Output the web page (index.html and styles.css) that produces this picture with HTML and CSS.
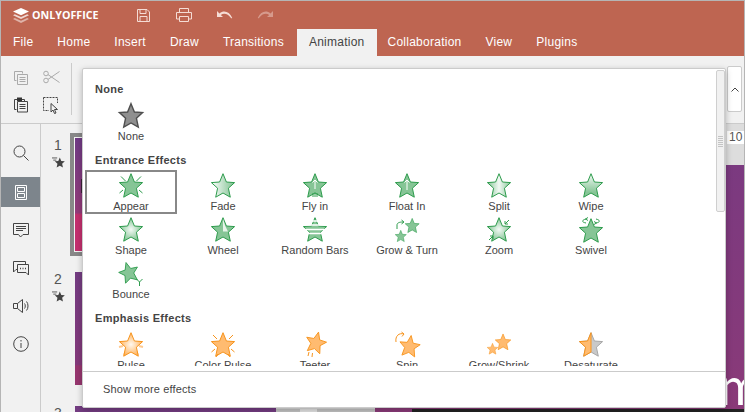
FILE: index.html
```html
<!DOCTYPE html>
<html lang="en">

<head>
    <meta charset="UTF-8" />
    <title>ONLYOFFICE Animation</title>
    <link rel="stylesheet" href="styles.css">
</head>

<body>
    <svg class="defs" width="0" height="0">
        <defs>
            <path id="star" d="M12 .7 15.4 9 23.6 9.6 17.4 15.2 19.3 24.2 12 20 4.7 24.2 6.6 15.2 .4 9.6 8.600 9Z" />
            <linearGradient id="gFade"><stop offset="0" stop-color="#fff" /><stop offset="1" stop-color="#7dc08f" /></linearGradient>
            <linearGradient id="gSplit"><stop offset="0" stop-color="#86c596" /><stop offset=".5" stop-color="#f2f9f4" /><stop offset="1" stop-color="#86c596" /></linearGradient>
            <linearGradient id="gWipe" x2="0" y2="1"><stop offset="0" stop-color="#f4faf6" /><stop offset=".8" stop-color="#86c596" /></linearGradient>
            <radialGradient id="gShape"><stop offset="0" stop-color="#f4faf6" /><stop offset="1" stop-color="#86c596" /></radialGradient>
            <radialGradient id="gPulse"><stop offset="0" stop-color="#fff8ef" /><stop offset="1" stop-color="#ffb45f" /></radialGradient>
        </defs>
    </svg>

    <div class="app">
        <div class="titlebar">
            <div class="logo">
                <svg width="16" height="15" viewBox="0 0 16 15">
                    <path d="M8 0 16 3.6 8 7.2 0 3.6Z" />
                    <path d="M1.8 6.2 0 7.2 8 11 16 7.2 14.2 6.2 8 9Z" opacity=".75" />
                    <path d="M1.8 10 0 11 8 15 16 11 14.2 10 8 12.8Z" opacity=".5" />
                </svg>
                <span>ONLYOFFICE</span>
            </div>
            <div class="quick">
                <svg width="16" height="16" viewBox="0 0 16 16"><path d="M2.5 2.5H12L14.5 5V14.5H2.5ZM5 2.5V6.5H11V2.5M5 14.5V9.5H12V14.5" /></svg>
                <svg width="18" height="16" viewBox="0 0 18 16"><path d="M4.5 5V1.5H13.5V5M4.5 12H1.5V5.5H16.5V12H13.5M4.5 9.5H13.5V14.5H4.5Z" /></svg>
                <svg width="16" height="10" viewBox="0 0 16 10"><path class="solid" d="M0 1V7H6L3.8 4.9C6.5 2.6 11 3.3 14 8 14.5 8.7 15.5 8.2 15 7.4 12.500 1.900 7 -.4 2.500 3.500Z" /></svg>
                <svg class="off" width="16" height="10" viewBox="0 0 16 10"><path class="solid" d="M16 1V7H10L12.200 4.900C9.500 2.600 5 3.300 2 8 1.500 8.700 .5 8.200 1 7.400 3.500 1.900 9 -.4 13.500 3.500Z" /></svg>
            </div>
        </div>

        <div class="tabs">
            <div class="tab">File</div>
            <div class="tab">Home</div>
            <div class="tab">Insert</div>
            <div class="tab">Draw</div>
            <div class="tab">Transitions</div>
            <div class="tab active">Animation</div>
            <div class="tab">Collaboration</div>
            <div class="tab">View</div>
            <div class="tab">Plugins</div>
        </div>

        <div class="toolbar">
            <div class="tool-grid">
                <svg class="off" width="16" height="16" viewBox="0 0 16 16"><path d="M1.500 1.500H9.500V3.500M1.500 1.500V10.500H3.500M4.500 4.500H14.500V14.500H4.500ZM6.500 7.500H12.500M6.500 9.500H12.500M6.500 11.500H12.500" /></svg>
                <svg class="off" width="17" height="14" viewBox="0 0 17 14"><circle cx="3" cy="3.500" r="2.300" /><circle cx="3" cy="10.500" r="2.300" /><path d="M5 4.600 16.500 12.500M5 9.400 16.500 1.500" /></svg>
                <svg width="16" height="16" viewBox="0 0 16 16"><path d="M3.500 12.500H1.500V2.500H4M9 2.500H11.500V4.500M4.500 4.500H14.500V15H4.500ZM6.500 7.500H12.500M6.500 9.500H12.500M6.500 11.500H12.500" /><path class="solid" d="M4 .500H9V4H4Z" /></svg>
                <svg width="16" height="17" viewBox="0 0 16 17"><path class="dash" d="M.500 .500H14.500V6M.500 .500V13.500H6" /><path d="M8 6.500V15L10 13 11.500 16.500 13 16 11.500 12.500H14.500Z" /></svg>
            </div>
            <div class="tool-sep"></div>
            <button class="collapse">
                <svg width="8" height="5" viewBox="0 0 8 5"><path d="M.500 4.500 4 1 7.500 4.500" /></svg>
            </button>
        </div>

        <div class="workspace">
            <div class="sidebar">
                <div class="side-btn search"><svg width="16" height="16" viewBox="0 0 16 16"><circle cx="6.500" cy="6.500" r="5.500" /><path d="M10.500 10.500 15.500 15.500" /></svg></div>
                <div class="side-btn active"><svg width="12" height="15" viewBox="0 0 12 15"><path d="M.500 .500H11.500V14.500H.500ZM2.500 2.500H9.500V6.500H2.500ZM2.500 8.500H9.500V12.500H2.500Z" /></svg></div>
                <div class="side-btn"><svg width="16" height="15" viewBox="0 0 16 15"><path d="M.500 .500H15.500V11.500H10L7.500 14 5.500 11.500H.500ZM3 3.500H13M3 5.500H13M3 7.500H10" /></svg></div>
                <div class="side-btn"><svg width="16" height="15" viewBox="0 0 16 15"><path d="M12.500 3V.500H.500V11L3 8.500H4M4.500 3.500H15.500V14L13 11.500H4.500Z" /><path class="dots" d="M7 7.500H8M9.500 7.500H10.500M12 7.500H13" /></svg></div>
                <div class="side-btn"><svg width="16" height="14" viewBox="0 0 16 14"><path d="M.500 4.500H4.500L9.500 .500V13.500L4.500 9.500H.500ZM4.500 4.500V9.500M11.500 4.500C12.500 5.500 12.500 8.500 11.500 9.500M13.500 2.500C15.500 4.500 15.500 9.500 13.500 11.500" /></svg></div>
                <div class="side-btn"><svg width="16" height="16" viewBox="0 0 16 16"><circle cx="8" cy="8" r="7.300" /><path d="M8 7V12M8 4V5.500" /></svg></div>
            </div>

            <div class="thumbs">
                <div class="thumb-row">
                    <div class="thumb-side">
                        <span>1</span>
                        <svg width="13" height="11" viewBox="-6 0 30 25"><use href="#star" fill="#444" /><path class="lines" d="M-6 2H6M-3 7H4" /></svg>
                    </div>
                    <div class="thumb first selected"><i class="thumb-mark"></i></div>
                </div>
                <div class="thumb-row">
                    <div class="thumb-side">
                        <span>2</span>
                        <svg width="13" height="11" viewBox="-6 0 30 25"><use href="#star" fill="#444" /><path class="lines" d="M-6 2H6M-3 7H4" /></svg>
                    </div>
                    <div class="thumb second"></div>
                </div>
                <div class="thumb-row">
                    <div class="thumb-side"><span>3</span></div>
                    <div class="thumb second"></div>
                </div>
            </div>

            <div class="editor">
                <div class="ruler">10</div>
                <div class="slide">
                    <span class="slide-title">m</span>
                    <i class="slide-band"></i>
                </div>
                <div class="hscroll"><i></i></div>
            </div>
        </div>

        <div class="effects">
            <div class="effects-scroll">
                <div class="group-title loose">None</div>
                <div class="fx-grid">
                    <div class="fx">
                        <svg width="24" height="25" viewBox="0 0 24 25"><use href="#star" class="st-none" fill="#8f8f8f" /></svg>
                        <span>None</span>
                    </div>
                </div>

                <div class="group-title">Entrance Effects</div>
                <div class="fx-grid">
                    <div class="fx selected">
                        <svg width="24" height="25" viewBox="0 0 24 25"><use href="#star" class="st-g" fill="#86c596" /><path class="ray-g" d="M2 3.500 6.500 8M22 3.500 17.500 8M4 17 .5 20M20 17 23.500 20" /></svg>
                        <span>Appear</span>
                    </div>
                    <div class="fx">
                        <svg width="24" height="25" viewBox="0 0 24 25"><use href="#star" class="st-g" fill="url(#gFade)" /></svg>
                        <span>Fade</span>
                    </div>
                    <div class="fx">
                        <svg width="24" height="25" viewBox="0 0 24 25"><use href="#star" class="st-g" fill="#86c596" /><path class="arrow-w" d="M12 16V7M9.500 9.500 12 7 14.500 9.500" /><path class="ray-g" d="M10 20V24M12 19.500V24M14 20V24" /></svg>
                        <span>Fly in</span>
                    </div>
                    <div class="fx">
                        <svg width="24" height="25" viewBox="0 0 24 25"><use href="#star" class="st-g" fill="#86c596" /><path class="arrow-w" d="M12 17V7M9.500 9.500 12 7 14.500 9.500" /></svg>
                        <span>Float In</span>
                    </div>
                    <div class="fx">
                        <svg width="24" height="25" viewBox="0 0 24 25"><use href="#star" class="st-g" fill="url(#gSplit)" /></svg>
                        <span>Split</span>
                    </div>
                    <div class="fx">
                        <svg width="24" height="25" viewBox="0 0 24 25"><use href="#star" class="st-g" fill="url(#gWipe)" /></svg>
                        <span>Wipe</span>
                    </div>
                    <div class="fx">
                        <svg width="24" height="25" viewBox="0 0 24 25"><use href="#star" class="st-g" fill="url(#gShape)" /></svg>
                        <span>Shape</span>
                    </div>
                    <div class="fx">
                        <svg width="24" height="25" viewBox="0 0 24 25"><use href="#star" class="st-g" fill="#86c596" /><path class="wedge" d="M12 2 14.500 9.500 17 14.500 12 14.500Z" /></svg>
                        <span>Wheel</span>
                    </div>
                    <div class="fx">
                        <svg width="24" height="25" viewBox="0 0 24 25"><use href="#star" class="st-g" fill="#86c596" /><path class="arrow-w wide" d="M0 4H24M0 8H24M0 12.500H24M0 16.500H24" /></svg>
                        <span>Random Bars</span>
                    </div>
                    <div class="fx">
                        <svg width="24" height="25" viewBox="0 0 24 25"><use href="#star" class="st-g" fill="#86c596" transform="translate(10 1) scale(.6)" /><use href="#star" class="st-g" fill="#86c596" transform="translate(0 13) scale(.48)" /><path class="ray-g" d="M2 12V8C2 6 4 5 8 5M6.500 3 9 5 6.500 7" /></svg>
                        <span>Grow &amp; Turn</span>
                    </div>
                    <div class="fx">
                        <svg width="24" height="25" viewBox="0 0 24 25"><use href="#star" class="st-g" fill="url(#gShape)" /><path class="ray-g" d="M22 3 18 7M18 4V7H21M2 23 6 19M3 19H6V22" /></svg>
                        <span>Zoom</span>
                    </div>
                    <div class="fx">
                        <svg width="24" height="25" viewBox="0 0 24 25"><use href="#star" class="st-g" fill="#86c596" transform="translate(0 1)" /><path class="ray-g" d="M7 2C3 3 2 5 7 6M17 2C21 3 22 5 17 6M9 .5 6.500 2 9 3.500M15 4.500 17.500 6 15 7.500" /></svg>
                        <span>Swivel</span>
                    </div>
                    <div class="fx">
                        <svg width="24" height="25" viewBox="0 0 24 25"><use href="#star" class="st-g" fill="#86c596" transform="rotate(-16 12 12) scale(.84)" /><path class="ray-g" d="M17.500 18 20.500 21 23.500 18M20.500 21V25" /></svg>
                        <span>Bounce</span>
                    </div>
                </div>

                <div class="group-title loose">Emphasis Effects</div>
                <div class="fx-grid">
                    <div class="fx">
                        <svg width="24" height="25" viewBox="0 0 24 25"><path class="ray-o soft" d="M4 14 0 15M20 14 24 15M7 19 5 23M17 19 19 23" /><use href="#star" class="st-o" fill="url(#gPulse)" /></svg>
                        <span>Pulse</span>
                    </div>
                    <div class="fx">
                        <svg width="24" height="25" viewBox="0 0 24 25"><use href="#star" class="st-o" fill="#ffbb70" /><path class="ray-o" d="M2 3 6 7M22 3 18 7M4 17 .5 20M20 17 23.500 20M5 25 7 22M19 25 17 22" /></svg>
                        <span>Color Pulse</span>
                    </div>
                    <div class="fx">
                        <svg width="24" height="25" viewBox="0 0 24 25"><use href="#star" class="st-o" fill="#ffbb70" transform="rotate(14 12 12) translate(2 -1) scale(.88)" /><path class="ray-o" d="M6 20 5 24M9.500 21 9 25" /></svg>
                        <span>Teeter</span>
                    </div>
                    <div class="fx">
                        <svg width="24" height="25" viewBox="0 0 24 25"><use href="#star" class="st-o" fill="#ffbb70" transform="translate(4 3) rotate(8 12 12) scale(.88)" /><path class="ray-o" d="M1 10C0 4 4 .5 9 2M6.500 0 9 2 7 4.500" /></svg>
                        <span>Spin</span>
                    </div>
                    <div class="fx">
                        <svg width="24" height="25" viewBox="0 0 24 25"><use href="#star" class="st-o" fill="#ffbb70" transform="translate(8 1.500) scale(.67)" /><use href="#star" class="st-o" fill="#ffbb70" transform="translate(0 11) scale(.46)" /></svg>
                        <span>Grow/Shrink</span>
                    </div>
                    <div class="fx">
                        <svg width="24" height="25" viewBox="0 0 24 25">
                            <use href="#star" class="st-grey" fill="#c9c9c9" />
                            <path class="st-o" d="M12 .7V20L4.700 24.200 6.600 15.200 .4 9.600 8.600 9Z" />
                        </svg>
                        <span>Desaturate</span>
                    </div>
                </div>
            </div>
            <div class="effects-foot">Show more effects</div>
            <div class="vscroll"><i></i></div>
        </div>
    </div>
</body>

</html>
```
FILE: styles.css
```css
* {
    box-sizing: border-box;
}

body {
    margin: 0;
    background-color: #fff;
    font-family: "Liberation Sans", Arial, sans-serif;
    overflow: hidden;
}

.defs {
    position: absolute;
}

svg {
    display: block;
    overflow: visible;
}

svg path,
svg circle {
    fill: none;
    stroke: #444;
}

/* the shared star takes its colours from each use */
svg path#star {
    fill: inherit;
    stroke: inherit;
}

.app {
    position: relative;
    display: flex;
    flex-direction: column;
    width: 745px;
    height: 412px;
    border: 1px solid #b5b5b5;
    border-bottom: none;
    overflow: hidden;
}

/* header */
.titlebar {
    display: flex;
    align-items: center;
    height: 28px;
    padding-left: 12px;
    background-color: #be6551;
}

.logo {
    display: flex;
    align-items: center;
    gap: 3px;
    width: 122px;
    color: #fff;
    font-family: "Open Sans", sans-serif;
    font-size: 10.7px;
    font-weight: 700;
}

.logo svg path {
    fill: #fff;
    stroke: none;
}

.quick {
    display: flex;
    align-items: center;
    gap: 24px;
}

.quick svg path {
    stroke: #f5dcd5;
}

.quick svg .solid {
    fill: #f5dcd5;
    stroke: none;
}

.quick .off {
    opacity: 0.45;
}

.tabs {
    display: flex;
    height: 27px;
    background-color: #be6551;
}

.tab {
    padding: 0 12px;
    color: #fff;
    font-size: 12px;
    letter-spacing: 0.25px;
    line-height: 27px;
}

.tab.active {
    margin-left: 1px;
    margin-right: -1px;
    color: #444;
    background-color: #f1f1f1;
}

/* toolbar */
.toolbar {
    position: relative;
    display: flex;
    height: 68px;
    padding: 14px 0 0 12px;
    background-color: #f1f1f1;
    border-bottom: 1px solid #cbcbcb;
}

.tool-grid {
    display: grid;
    grid-template-columns: 30px 22px;
    grid-auto-rows: 27px;
}

.tool-grid .off path,
.tool-grid .off circle {
    stroke: #aaa;
}

.tool-grid .solid {
    fill: #333;
    stroke: none;
}

.tool-grid .dash {
    stroke-dasharray: 2 1;
}

.tool-sep {
    width: 1px;
    height: 52px;
    margin: -7px 0 0 6px;
    background-color: #cbcbcb;
}

.collapse {
    position: absolute;
    top: 10px;
    right: 2px;
    display: flex;
    align-items: center;
    justify-content: center;
    width: 15px;
    height: 46px;
    padding: 0;
    background-color: #fff;
    border: 1px solid #cbcbcb;
    border-radius: 2px;
}

/* left side */
.workspace {
    flex: 1;
    display: flex;
    min-height: 0;
}

.sidebar {
    display: flex;
    flex-direction: column;
    gap: 8px;
    width: 40px;
    padding-top: 15px;
    background-color: #f1f1f1;
    border-right: 1px solid #cbcbcb;
}

.side-btn {
    display: flex;
    align-items: center;
    justify-content: center;
    height: 30px;
}

.side-btn.search {
    padding-bottom: 2px;
}

.side-btn.active {
    background-color: #7d858c;
}

.side-btn.active path {
    stroke: #fff;
}

.side-btn .dots {
    stroke-width: 1.5;
}

.thumbs {
    display: flex;
    flex-direction: column;
    gap: 21px;
    width: 235px;
    padding-top: 14px;
    background-color: #f1f1f1;
    overflow: hidden;
}

.thumb-row {
    display: flex;
    flex-shrink: 0;
    height: 113px;
}

.thumb-side {
    display: flex;
    flex-direction: column;
    align-items: center;
    gap: 4px;
    width: 34px;
    margin-top: -1px;
    color: #555;
    font-size: 14px;
}

.thumb-side .lines {
    stroke-width: 2;
}

.thumb {
    position: relative;
    flex: 1;
}

.thumb.first {
    background: linear-gradient(#6f3a85, #933a79 66%, #c32f6e 68%, #c42f6e);
}

.thumb.second {
    background: linear-gradient(#733c82, #84397a 82%, #97366f 83%);
}

.thumb.selected {
    outline: 4px solid #888;
    outline-offset: 1px;
}

.thumb-mark {
    position: absolute;
    top: 41px;
    left: 6px;
    width: 2px;
    height: 14px;
    background-color: #3a2238;
}

/* editor */
.editor {
    position: relative;
    flex: 1;
    display: flex;
    flex-direction: column;
    background-color: #ddd;
}

.ruler {
    height: 13px;
    margin: 7px 0 21px 451px;
    padding-left: 2px;
    color: #555;
    font-size: 12px;
    line-height: 13px;
    background-color: #fff;
}

.slide {
    position: relative;
    flex: 1;
    margin-left: 99px;
    background: linear-gradient(#7b3a80, #8a3a78);
    overflow: hidden;
}

.slide-title {
    position: absolute;
    left: 344px;
    top: 190px;
    color: #fff;
    font-family: Lato, sans-serif;
    font-weight: 400;
    font-size: 52px;
    line-height: 60px;
}

.slide-band {
    position: absolute;
    right: 0;
    bottom: 0;
    left: 37px;
    height: 3px;
    background-color: #222;
}

.hscroll {
    position: absolute;
    left: 0;
    bottom: 0;
    width: 99px;
    height: 3px;
    padding-left: 24px;
    background-color: #c2c2c2;
}

.hscroll i {
    display: block;
    width: 17px;
    height: 3px;
    background-color: #e2e2e2;
}

/* effects dropdown */
.effects {
    position: absolute;
    top: 67px;
    left: 81px;
    display: flex;
    flex-direction: column;
    width: 644px;
    height: 340px;
    background-color: #fff;
    border: 1px solid #cbcbcb;
    border-radius: 2px;
    box-shadow: 0 2px 6px rgba(0, 0, 0, 0.25);
}

.effects-scroll {
    height: 299px;
    padding: 12px 0 0 2px;
    overflow: hidden;
}

.group-title {
    height: 16px;
    margin: 8px 0 2px 10px;
    color: #444;
    font-size: 11px;
    font-weight: 700;
    letter-spacing: 0.3px;
    line-height: 16px;
}

.group-title:first-child {
    margin-top: 0;
}

.group-title.loose {
    margin-bottom: 3px;
}

.fx-grid {
    display: grid;
    grid-template-columns: repeat(6, 92px);
    grid-auto-rows: 44px;
}

.fx {
    display: flex;
    flex-direction: column;
    align-items: center;
    padding-top: 3px;
    color: #444;
    font-size: 11px;
    line-height: 14px;
}

.fx span {
    margin-top: 1px;
    white-space: nowrap;
}

.fx.selected {
    border: 2px solid #888;
    padding-top: 1px;
}

.st-g {
    stroke: #2e9c4d;
}

.st-o {
    stroke: #f7941d;
}

.st-none {
    stroke: #4f4f4f;
    stroke-width: 1.4;
}

.st-grey {
    stroke: #a8a8a8;
}

svg path.st-o {
    fill: #ffbb70;
    stroke: #f7941d;
}

svg path.ray-g {
    stroke: #2e9c4d;
}

svg path.ray-o {
    stroke: #f7941d;
}

svg path.ray-o.soft {
    stroke: #ffc98f;
    stroke-width: 2;
}

svg path.arrow-w {
    stroke: #fff;
}

svg path.arrow-w.wide {
    stroke-width: 1.5;
}

svg path.wedge {
    fill: #fff;
    stroke: none;
    opacity: 0.8;
}

.effects-foot {
    margin-top: 5px;
    padding-left: 20px;
    color: #444;
    font-size: 11px;
    letter-spacing: 0.15px;
    line-height: 35px;
    border-top: 1px solid #cbcbcb;
}

.vscroll {
    position: absolute;
    top: 1px;
    right: 0;
    width: 9px;
    height: 142px;
    padding-top: 65px;
    background-color: #f1f1f1;
    border: 1px solid #cfcfcf;
    border-radius: 2px;
}

.vscroll i {
    display: block;
    width: 5px;
    height: 12px;
    margin-left: 1px;
    background: repeating-linear-gradient(#c4c4c4 0, #c4c4c4 1px, transparent 1px, transparent 2px);
}
```
